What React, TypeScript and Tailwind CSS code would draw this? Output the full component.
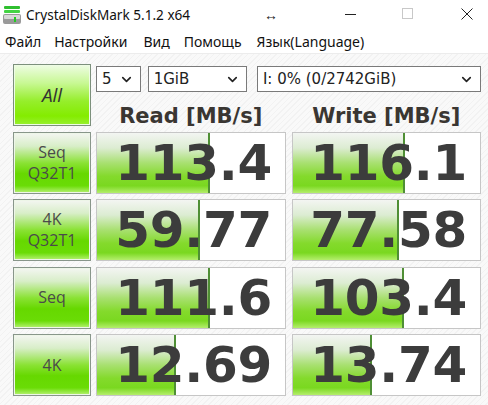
import React from "react";
import { ChevronDown } from "lucide-react";

const rows = [
  { label: ["Seq", "Q32T1"], r: "113.4", rw: 113, w: "116.1", ww: 112 },
  { label: ["4K", "Q32T1"], r: "59.77", rw: 103, w: "77.58", ww: 106 },
  { label: ["Seq"], r: "111.6", rw: 113, w: "103.4", ww: 111 },
  { label: ["4K"], r: "12.69", rw: 79, w: "13.74", ww: 79 },
];

function Select({ text, className }: { text: string; className: string }) {
  return (
    <div
      className={`h-[26px] border border-[#7a7a7a] bg-white flex items-center justify-between pl-[5px] pr-[6px] text-[15px] text-[#222] font-['DejaVu_Sans',sans-serif] ${className}`}
    >
      <span className="leading-none">{text}</span>
      <ChevronDown size={15} strokeWidth={2.6} className="text-[#222]" />
    </div>
  );
}

function ValueBox({ value, bar }: { value: string; bar: number }) {
  return (
    <div className="relative h-full border border-[#c6c6c6] bg-white overflow-hidden">
      <div
        className="absolute left-0 top-0 bottom-0 border-r-2 border-[#4f8f35] bg-[linear-gradient(to_bottom,#f3f5f2_0%,#dcecd2_25%,#a8e070_50%,#84da2c_72%,#7ad820_88%,#b4ee6c_100%)]"
        style={{ width: bar }}
      />
      <div className="relative h-full flex items-center justify-end pr-[13px] font-['DejaVu_Sans',sans-serif] font-bold text-[50px] leading-none text-[#3c3c3c] tracking-[-0.3px]">
        {value}
      </div>
    </div>
  );
}

function GreenButton({ lines }: { lines: string[] }) {
  return (
    <div className="h-full border border-[#88968a] shadow-[inset_0_0_0_1px_#eef6e8] bg-[linear-gradient(to_bottom,#f4f6f2_0%,#d8eec8_22%,#8ae234_50%,#66d800_68%,#6adc06_88%,#b8f276_100%)] flex flex-col items-center justify-center font-['Open_Sans',sans-serif] text-[16px] leading-[21px] text-[#4a4a4a]">
      {lines.map((l) => (
        <span key={l}>{l}</span>
      ))}
    </div>
  );
}

export default function App() {
  return (
    <div className="w-[488px] h-[405px] bg-white overflow-hidden flex flex-col font-['Noto_Sans',sans-serif]">
      {/* Title bar */}
      <div className="h-[30px] flex items-center relative shrink-0">
        <svg width="20" height="20" viewBox="0 0 20 20" className="ml-[2px]">
          <rect x="2" y="1" width="16" height="3" rx="1" fill="#2fbf2f" />
          <rect x="2" y="5" width="16" height="3" rx="1" fill="#44d444" />
          <rect x="1" y="9" width="18" height="10" rx="2" fill="#9a9a9a" />
          <rect x="2" y="10" width="16" height="4" rx="1" fill="#d8d8d8" />
          <rect x="12" y="12" width="2" height="5" fill="#22cc22" />
        </svg>
        <span className="ml-[4px] text-[13.6px] text-[#111] leading-none">CrystalDiskMark 5.1.2 x64</span>
        <span className="absolute left-[264px] top-[4px] text-[14px] font-bold text-[#222]">↔</span>
        <div className="absolute left-[345px] top-[14px] w-[11px] h-[1px] bg-[#222]" />
        <div className="absolute left-[402px] top-[8px] w-[11px] h-[11px] border border-[#c8c8c8]" />
        <svg className="absolute left-[461px] top-[8px]" width="12" height="12" viewBox="0 0 12 12">
          <path d="M0.5 0.5 L11.5 11.5 M11.5 0.5 L0.5 11.5" stroke="#222" strokeWidth="1" />
        </svg>
      </div>
      {/* Menu */}
      <div className="h-[24px] flex items-center text-[14px] text-[#111] shrink-0 border-b border-[#ececec]">
        <span className="ml-[5px]">Файл</span>
        <span className="ml-[13px]">Настройки</span>
        <span className="ml-[16px]">Вид</span>
        <span className="ml-[14px]">Помощь</span>
        <span className="ml-[15px]">Язык(Language)</span>
      </div>
      {/* Main */}
      <div className="flex-1 bg-[repeating-linear-gradient(135deg,#f9f9f9_0px,#f9f9f9_3px,#f2f2f2_3px,#f2f2f2_4px)] pl-[13px] pt-[10px]">
        <div className="grid grid-cols-[78px_190px_190px] grid-rows-[62px_62px_62px_62px_62px] gap-x-[5px] gap-y-[5.5px]">
          <div className="h-full border border-[#7c907c] shadow-[inset_0_0_0_1px_#eefce4] bg-[linear-gradient(to_bottom,#eefce4_0%,#c8f894_30%,#96ee2c_60%,#84ec00_85%,#98f030_100%)] flex items-center justify-center font-['Open_Sans',sans-serif] italic text-[19px] text-[#333]">
            All
          </div>
          <div className="col-span-2 flex flex-col">
            <div className="flex items-center mt-[2px]">
              <Select text="5" className="w-[45px]" />
              <Select text="1GiB" className="w-[100px] ml-[7px]" />
              <Select text="I: 0% (0/2742GiB)" className="w-[226px] ml-[10px]" />
            </div>
            <div className="flex mt-[14px] font-['DejaVu_Sans',sans-serif] font-bold text-[21px] text-[#3a3632] leading-none">
              <div className="w-[190px] text-center">Read [MB/s]</div>
              <div className="w-[190px] ml-[6px] text-center">Write [MB/s]</div>
            </div>
          </div>
          {rows.map((row, i) => (
            <React.Fragment key={i}>
              <GreenButton lines={row.label} />
              <ValueBox value={row.r} bar={row.rw} />
              <div className="ml-[1px] h-full">
                <ValueBox value={row.w} bar={row.ww} />
              </div>
            </React.Fragment>
          ))}
        </div>
      </div>
    </div>
  );
}
